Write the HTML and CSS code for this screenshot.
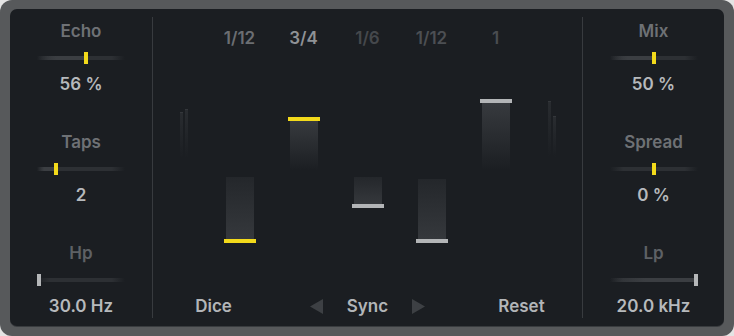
FILE: index.html
```html
<!DOCTYPE html>
<html lang="en">
<head>
  <meta charset="UTF-8">
  <title>Echo Taps</title>
  <link rel="stylesheet" href="styles.css">
</head>
<body>
  <div class="device">
    <div class="panel">

      <div class="side left">
        <div class="control">
          <div class="label">Echo</div>
          <div class="slider">
            <div class="track">
              <div class="fill" style="width: 56%"></div>
              <div class="thumb" style="left: calc(84px * 0.56)"></div>
            </div>
          </div>
          <div class="value">56 %</div>
        </div>
        <div class="control">
          <div class="label">Taps</div>
          <div class="slider">
            <div class="track">
              <div class="fill" style="width: 20%"></div>
              <div class="thumb" style="left: calc(84px * 0.2)"></div>
            </div>
          </div>
          <div class="value">2</div>
        </div>
        <div class="control">
          <div class="label dim">Hp</div>
          <div class="slider">
            <div class="track">
              <div class="fill" style="width: 0%"></div>
              <div class="thumb off" style="left: 0"></div>
            </div>
          </div>
          <div class="value">30.0 Hz</div>
        </div>
      </div>

      <div class="divider"></div>

      <div class="center">
        <div class="lanes step-labels">
          <span class="step-label" style="grid-column: 2; color: #6b6e72">1/12</span>
          <span class="step-label" style="color: #8f9296">3/4</span>
          <span class="step-label" style="color: #45484c">1/6</span>
          <span class="step-label" style="color: #4c4f53">1/12</span>
          <span class="step-label" style="color: #4a4d51">1</span>
        </div>

        <div class="lanes steps">
          <div class="meter">
            <i style="margin-top: 22px; height: 45px"></i>
            <i style="margin-top: 19px; height: 48px"></i>
          </div>
          <div class="bar down" style="margin-top: 87px; height: 66px">
            <div class="bar-body"></div>
            <div class="cap on"></div>
          </div>
          <div class="bar up" style="margin-top: 27px; height: 53px">
            <div class="cap on"></div>
            <div class="bar-body"></div>
          </div>
          <div class="bar down" style="margin-top: 87px; height: 31px">
            <div class="bar-body"></div>
            <div class="cap"></div>
          </div>
          <div class="bar down" style="margin-top: 89px; height: 64px">
            <div class="bar-body"></div>
            <div class="cap"></div>
          </div>
          <div class="bar up" style="margin-top: 9px; height: 71px">
            <div class="cap"></div>
            <div class="bar-body"></div>
          </div>
          <div class="meter">
            <i style="margin-top: 11px; height: 55px"></i>
            <i style="margin-top: 26px; height: 40px"></i>
          </div>
        </div>

        <div class="transport">
          <span class="button">Dice</span>
          <div class="sync">
            <svg class="arrow" width="13" height="15" viewBox="0 0 13 15"><polygon points="13,0 13,15 0,7.5"/></svg>
            <span class="button">Sync</span>
            <svg class="arrow" width="13" height="15" viewBox="0 0 13 15"><polygon points="0,0 0,15 13,7.5"/></svg>
          </div>
          <span class="button">Reset</span>
        </div>
      </div>

      <div class="divider"></div>

      <div class="side right">
        <div class="control">
          <div class="label">Mix</div>
          <div class="slider">
            <div class="track">
              <div class="fill" style="width: 50%"></div>
              <div class="thumb" style="left: calc(84px * 0.5)"></div>
            </div>
          </div>
          <div class="value">50 %</div>
        </div>
        <div class="control">
          <div class="label">Spread</div>
          <div class="slider">
            <div class="track">
              <div class="fill" style="width: 0%"></div>
              <div class="thumb" style="left: calc(84px * 0.5)"></div>
            </div>
          </div>
          <div class="value">0 %</div>
        </div>
        <div class="control">
          <div class="label dim">Lp</div>
          <div class="slider">
            <div class="track">
              <div class="fill" style="width: 100%"></div>
              <div class="thumb off" style="left: 84px"></div>
            </div>
          </div>
          <div class="value">20.0 kHz</div>
        </div>
      </div>

    </div>
  </div>
</body>
</html>
```

FILE: styles.css
```css
body {
  margin: 0;
  background: #e4e4e4;
  font-family: 'Inter', 'Liberation Sans', sans-serif;
  font-weight: 600;
}

.device {
  width: 734px;
  height: 336px;
  box-sizing: border-box;
  padding: 9px 10px 10px;
  background: #57595b;
  border-radius: 12px;
}

.panel {
  display: flex;
  height: 317px;
  background: #1b1e22;
  border-radius: 7px;
  box-shadow: 0 1px 0 #393c3f;
}

.divider {
  width: 1px;
  margin: 8px 0;
  background: #383b3f;
}

/* side columns */

.side {
  width: 142px;
  display: flex;
  flex-direction: column;
  align-items: center;
  gap: 38px;
  padding-top: 12px;
}

.side.right {
  width: 141px;
}

.control {
  display: flex;
  flex-direction: column;
  align-items: center;
}

.label {
  font-size: 17px;
  line-height: 20px;
  color: #6e7175;
}

.label.dim {
  color: #5e6165;
}

.value {
  margin-top: 10px;
  font-size: 17px;
  line-height: 20px;
  color: #b6b9bc;
}

.slider {
  height: 12px;
  margin-top: 11px;
  display: flex;
  align-items: center;
}

.track {
  position: relative;
  width: 88px;
  height: 4px;
  background: linear-gradient(90deg, rgba(46, 49, 53, 0), #2d3034 15%, #2d3034 85%, rgba(46, 49, 53, 0));
}

.fill {
  height: 100%;
  background: linear-gradient(90deg, rgba(62, 65, 69, 0), #3b3e42 40%);
}

.thumb {
  position: absolute;
  top: -4px;
  width: 4px;
  height: 12px;
  background: #f3da1b;
}

.thumb.off {
  background: #b5b7b9;
}

/* sequencer */

.center {
  flex: 1;
  display: flex;
  flex-direction: column;
  align-items: center;
  padding: 19px 0 10px;
}

.lanes {
  display: grid;
  grid-template-columns: 48px repeat(5, 64px) 48px;
  justify-items: center;
}

.step-label {
  font-size: 17px;
  line-height: 20px;
}

.steps {
  height: 160px;
  margin-top: 42px;
  align-items: start;
}

.bar {
  width: 32px;
  display: flex;
  flex-direction: column;
  align-items: center;
}

.bar-body {
  width: 28px;
  flex: 1;
}

.bar.down .bar-body {
  background: linear-gradient(#24272b, #35383c);
}

.bar.up .bar-body {
  background: linear-gradient(#373a3e, rgba(27, 30, 34, 0));
}

.cap {
  width: 32px;
  height: 4px;
  flex-shrink: 0;
  background: #b3b5b7;
}

.cap.on {
  background: #f3da1b;
}

.meter {
  display: flex;
  gap: 2px;
}

.meter i {
  width: 3px;
  border-top: 1px solid #34373b;
  background: linear-gradient(#292c30, rgba(27, 30, 34, 0));
}

.transport {
  margin-top: auto;
  display: grid;
  grid-template-columns: repeat(3, 100px);
  column-gap: 54px;
  justify-items: center;
  align-items: center;
}

.button {
  font-size: 17px;
  line-height: 20px;
  color: #b2b5b8;
}

.sync {
  display: flex;
  align-items: center;
  gap: 24px;
}

.arrow {
  fill: #3d4044;
}
```
